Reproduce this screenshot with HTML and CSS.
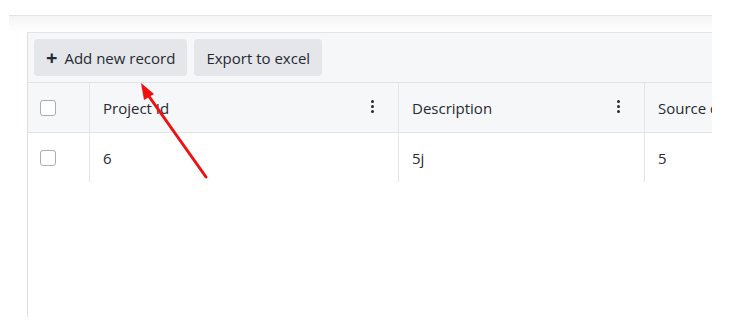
FILE: index.html
```html
<!DOCTYPE html>
<html lang="en">
<head>
    <meta charset="UTF-8">
    <meta name="viewport" content="width=device-width, initial-scale=1.0">
    <title>Projects</title>
    <link rel="stylesheet" href="styles.css">
</head>
<body>
    <div class="page">
        <div class="topbar"></div>

        <div class="grid">
            <div class="toolbar">
                <button class="btn"><span class="plus">+</span> Add new record</button>
                <button class="btn">Export to excel</button>
            </div>

            <div class="table">
                <div class="row head">
                    <div class="cell check"><span class="box"></span></div>
                    <div class="cell">Project Id<span class="kebab"><i></i><i></i><i></i></span></div>
                    <div class="cell">Description<span class="kebab"><i></i><i></i><i></i></span></div>
                    <div class="cell">Source data</div>
                </div>
                <div class="row">
                    <div class="cell check"><span class="box"></span></div>
                    <div class="cell">6</div>
                    <div class="cell">5j</div>
                    <div class="cell">5</div>
                </div>
            </div>
        </div>
    </div>

    <!-- annotation arrow -->
    <svg class="arrow" width="739" height="326" viewBox="0 0 739 326">
        <line x1="206" y1="177" x2="148" y2="95" stroke="#f01010" stroke-width="3" stroke-linecap="round"/>
        <polygon points="141,83 154,94 144,100" fill="#f01010"/>
    </svg>
</body>
</html>
```

FILE: styles.css
```css
body {
    margin: 0;
    font-family: "Open Sans", "Noto Sans", Arial, sans-serif;
    color: #262a31;
    background: #fff;
}
.page {
    width: 703px;
    padding: 15px 0 0 9px;
    overflow: hidden;
}
.topbar {
    height: 16px;
    border-top: 1px solid #e4e4e4;
    background: linear-gradient(#f4f4f4, #fff);
}
.grid {
    margin-left: 18px;
    height: 284px;
    border-left: 1px solid #dcdee2;
    border-top: 1px solid #e2e4e8;
    overflow: hidden;
}
.toolbar {
    display: flex;
    gap: 7px;
    padding: 6px 6px;
    background: #f6f7f9;
    border-bottom: 1px solid #e1e3e8;
}
.btn {
    height: 37px;
    padding: 0 12px;
    border: none;
    border-radius: 4px;
    background: #e4e6ea;
    color: #262a31;
    font-family: inherit;
    font-size: 15px;
    display: flex;
    align-items: center;
    white-space: nowrap;
}
.btn .plus {
    font-size: 20px;
    font-weight: 700;
    margin-right: 7px;
    line-height: 1;
}
.table {
    width: 900px;
}
.row {
    display: grid;
    grid-template-columns: 62px 309px 246px 283px;
    height: 49px;
}
.row.head {
    background: #f6f7f9;
    border-bottom: 1px solid #e1e3e8;
}
.cell {
    display: flex;
    align-items: center;
    padding: 0 13px;
    font-size: 15px;
    border-right: 1px solid #e3e5ea;
    position: relative;
    white-space: nowrap;
}
.cell.check {
    padding: 0 0 0 12px;
}
.box {
    width: 14px;
    height: 14px;
    border: 1px solid #a9adb3;
    border-radius: 3px;
    background: #fff;
}
.kebab {
    position: absolute;
    right: 24px;
    top: 17px;
    display: flex;
    flex-direction: column;
    gap: 2px;
}
.kebab i {
    width: 3px;
    height: 3px;
    border-radius: 50%;
    background: #262a31;
}
.arrow {
    position: absolute;
    left: 0;
    top: 0;
    pointer-events: none;
}
```
